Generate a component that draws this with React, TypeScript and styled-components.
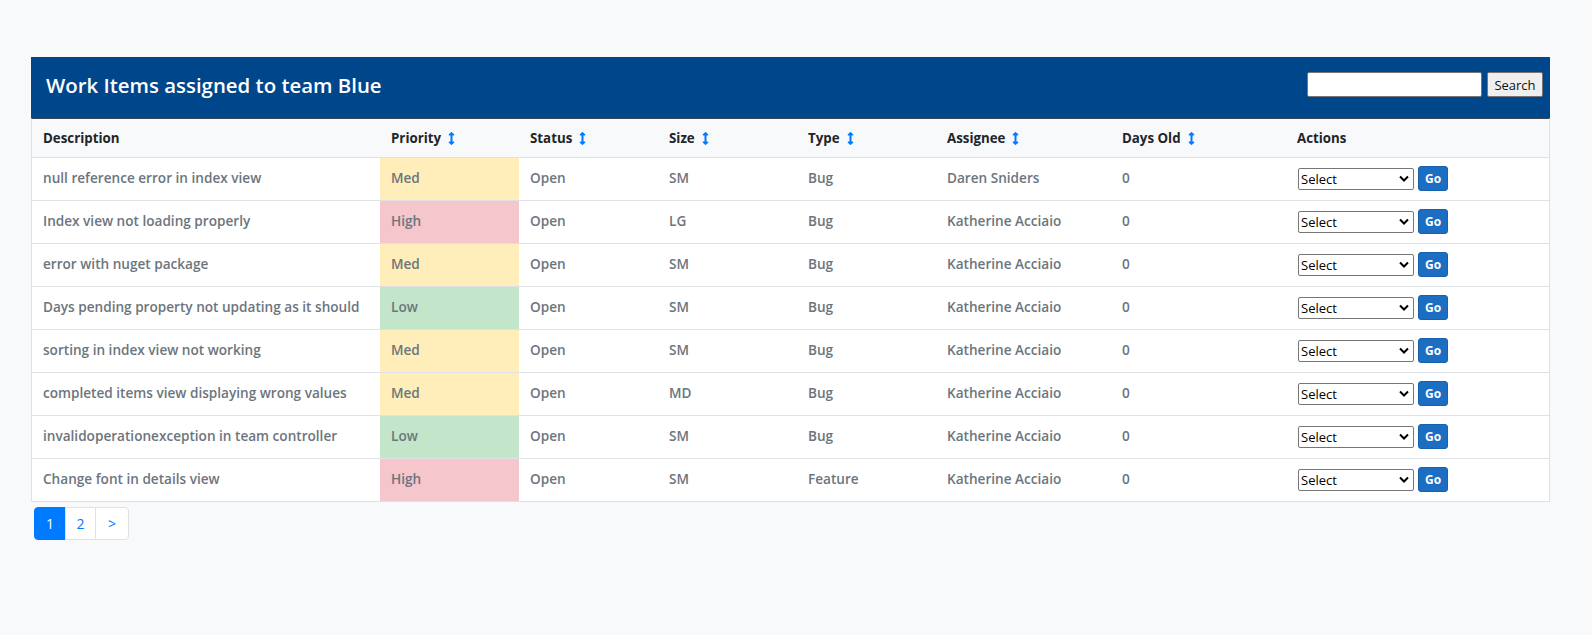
import React from "react";
import styled, { createGlobalStyle } from "styled-components";
import { FaArrowsAltV } from "react-icons/fa";

const Global = createGlobalStyle`
  * { box-sizing: border-box; }
  html, body { margin: 0; padding: 0; background: #f8f9fa; }
  body { font-family: "Open Sans", "Noto Sans", sans-serif; color: #212529; }
`;

const Page = styled.div`
  padding: 57px 0 40px 31px;
`;

const Card = styled.div`
  width: 1519px;
`;

const Header = styled.div`
  height: 61px;
  background: #00468b;
  display: flex;
  justify-content: space-between;
  align-items: flex-start;
  padding: 0 7px 0 15px;
`;

const Title = styled.h4`
  margin: 14px 0 0 0;
  font-size: 20.4px;
  line-height: 28px;
  font-weight: 600;
  color: #fff;
`;

const SearchForm = styled.form`
  display: flex;
  gap: 5px;
  margin-top: 15px;
`;

const SearchInput = styled.input`
  width: 175px;
  height: 25px;
  border: 1px solid #767676;
  border-radius: 2px;
  background: #fff;
  padding: 0 4px;
`;

const SearchButton = styled.button`
  width: 56px;
  height: 25px;
  border: 1px solid #767676;
  border-radius: 2px;
  background: #efefef;
  color: #111;
  font-family: "Open Sans", sans-serif;
  font-size: 13px;
  padding: 0;
`;

const Table = styled.table`
  width: 1519px;
  border-collapse: separate;
  border-spacing: 0;
  table-layout: fixed;
  border: 1px solid #dee2e6;
  border-top: 1px solid #3b4756;
`;

const Th = styled.th`
  height: 38px;
  padding: 0 11px;
  text-align: left;
  vertical-align: middle;
  background: #f8f9fa;
  font-size: 13.3px;
  font-weight: 700;
  color: #212529;
  white-space: nowrap;
`;

const SortIcon = styled(FaArrowsAltV)`
  color: #007bff;
  width: 7px;
  height: 13px;
  margin-left: 7px;
  vertical-align: -2px;
`;

const priorityBg: Record<string, string> = {
  Med: "#ffeeba",
  High: "#f5c6cb",
  Low: "#c3e6cb",
};

const Td = styled.td<{ $bg?: string }>`
  height: 43px;
  padding: 0 11px 4px;
  border-top: 1px solid #dee2e6;
  background: ${(p) => p.$bg || "#fff"};
  vertical-align: middle;
  font-size: 13.6px;
  font-weight: 600;
  color: #6c757d;
  white-space: nowrap;
  overflow: hidden;
`;

const ActionWrap = styled.div`
  display: flex;
  align-items: center;
  gap: 4px;
  padding-top: 4px;
  padding-left: 1px;
`;

const SelectBox = styled.div`
  position: relative;
  width: 116px;
  height: 22px;
`;

const Select = styled.select`
  appearance: none;
  width: 116px;
  height: 22px;
  border: 1px solid #767676;
  border-radius: 2px;
  background: #fff;
  color: #000;
  font-family: "Open Sans", sans-serif;
  font-size: 13px;
  padding: 0 0 0 2px;
  line-height: 20px;
`;

const Chevron = styled.svg`
  position: absolute;
  right: 5px;
  top: 7px;
  width: 10px;
  height: 7px;
  pointer-events: none;
`;

const GoButton = styled.button`
  width: 30px;
  height: 25px;
  border: 1px solid #1861ac;
  border-radius: 3px;
  background: #1b6ec2;
  color: #fff;
  font-family: "Open Sans", sans-serif;
  font-weight: 700;
  font-size: 12px;
  padding: 0;
  margin-top: -1px;
`;

const Pagination = styled.ul`
  display: flex;
  list-style: none;
  margin: 5px 0 0 3px;
  padding: 0;
`;

const PageItem = styled.li<{ $active?: boolean; $w: number }>`
  width: ${(p) => p.$w}px;
  height: 33px;
  display: flex;
  align-items: center;
  justify-content: center;
  font-size: 14px;
  border: 1px solid ${(p) => (p.$active ? "#007bff" : "#dee2e6")};
  margin-left: -1px;
  background: ${(p) => (p.$active ? "#007bff" : "#fff")};
  color: ${(p) => (p.$active ? "#fff" : "#007bff")};
  &:first-child { margin-left: 0; border-radius: 4px 0 0 4px; }
  &:last-child { border-radius: 0 4px 4px 0; }
`;

const cols = [348, 139, 139, 139, 139, 175, 175, 263];

const headers: [string, boolean][] = [
  ["Description", false],
  ["Priority", true],
  ["Status", true],
  ["Size", true],
  ["Type", true],
  ["Assignee", true],
  ["Days Old", true],
  ["Actions", false],
];

const rows = [
  ["null reference error in index view", "Med", "Open", "SM", "Bug", "Daren Sniders", "0"],
  ["Index view not loading properly", "High", "Open", "LG", "Bug", "Katherine Acciaio", "0"],
  ["error with nuget package", "Med", "Open", "SM", "Bug", "Katherine Acciaio", "0"],
  ["Days pending property not updating as it should", "Low", "Open", "SM", "Bug", "Katherine Acciaio", "0"],
  ["sorting in index view not working", "Med", "Open", "SM", "Bug", "Katherine Acciaio", "0"],
  ["completed items view displaying wrong values", "Med", "Open", "MD", "Bug", "Katherine Acciaio", "0"],
  ["invalidoperationexception in team controller", "Low", "Open", "SM", "Bug", "Katherine Acciaio", "0"],
  ["Change font in details view", "High", "Open", "SM", "Feature", "Katherine Acciaio", "0"],
];

export default function App() {
  return (
    <>
      <Global />
      <Page>
        <Card>
          <Header>
            <Title>Work Items assigned to team Blue</Title>
            <SearchForm onSubmit={(e) => e.preventDefault()}>
              <SearchInput type="text" />
              <SearchButton type="submit">Search</SearchButton>
            </SearchForm>
          </Header>
          <Table>
            <colgroup>
              {cols.map((w, i) => (
                <col key={i} style={{ width: w }} />
              ))}
            </colgroup>
            <thead>
              <tr>
                {headers.map(([h, s]) => (
                  <Th key={h}>
                    {h}
                    {s && <SortIcon />}
                  </Th>
                ))}
              </tr>
            </thead>
            <tbody>
              {rows.map((r, i) => (
                <tr key={i}>
                  {r.map((c, j) => (
                    <Td key={j} $bg={j === 1 ? priorityBg[c] : undefined}>
                      {c}
                    </Td>
                  ))}
                  <Td>
                    <ActionWrap>
                      <SelectBox>
                        <Select defaultValue="Select">
                          <option>Select</option>
                        </Select>
                        <Chevron viewBox="0 0 10 7">
                          <path d="M1 1.5 L5 5.5 L9 1.5" fill="none" stroke="#000" strokeWidth="2" />
                        </Chevron>
                      </SelectBox>
                      <GoButton>Go</GoButton>
                    </ActionWrap>
                  </Td>
                </tr>
              ))}
            </tbody>
          </Table>
          <Pagination>
            <PageItem $active $w={32}>1</PageItem>
            <PageItem $w={31}>2</PageItem>
            <PageItem $w={34}>&gt;</PageItem>
          </Pagination>
        </Card>
      </Page>
    </>
  );
}
